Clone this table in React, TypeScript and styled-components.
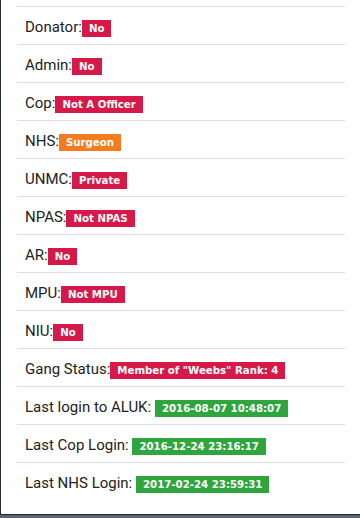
import React from 'react'
import styled, { createGlobalStyle } from 'styled-components'

type Tone = 'danger' | 'warning' | 'success'

type Row = {
  label: string
  value: string
  tone: Tone
  spaced?: boolean
}

const rows: Row[] = [
  { label: 'Donator:', value: 'No', tone: 'danger' },
  { label: 'Admin:', value: 'No', tone: 'danger' },
  { label: 'Cop:', value: 'Not A Officer', tone: 'danger' },
  { label: 'NHS:', value: 'Surgeon', tone: 'warning' },
  { label: 'UNMC:', value: 'Private', tone: 'danger' },
  { label: 'NPAS:', value: 'Not NPAS', tone: 'danger' },
  { label: 'AR:', value: 'No', tone: 'danger' },
  { label: 'MPU:', value: 'Not MPU', tone: 'danger' },
  { label: 'NIU:', value: 'No', tone: 'danger' },
  { label: 'Gang Status:', value: 'Member of "Weebs" Rank: 4', tone: 'danger' },
  { label: 'Last login to ALUK:', value: '2016-08-07 10:48:07', tone: 'success', spaced: true },
  { label: 'Last Cop Login:', value: '2016-12-24 23:16:17', tone: 'success', spaced: true },
  { label: 'Last NHS Login:', value: '2017-02-24 23:59:31', tone: 'success', spaced: true },
]

const toneColors: Record<Tone, string> = {
  danger: '#d7194a',
  warning: '#f47c20',
  success: '#2ea63d',
}

const GlobalStyle = createGlobalStyle`
  html, body {
    margin: 0;
    padding: 0;
    background: #5d6472;
  }
  body {
    font-family: Roboto, "Liberation Sans", sans-serif;
  }
`

const Window = styled.div`
  height: 515px;
  box-sizing: border-box;
  padding-top: 6px;
  background: #ffffff;
  border-left: 1px solid #1f2b3b;
  border-bottom: 1px solid #262626;
`

const List = styled.ul`
  list-style: none;
  margin: 0 0 0 16px;
  padding: 0;
  width: 328px;
`

const Item = styled.li`
  height: 38px;
  box-sizing: border-box;
  border-top: 1px solid #dddddd;
  padding: 10px 8px 0;
  font-size: 15px;
  line-height: 20px;
  color: #222222;
  white-space: nowrap;
`

const Badge = styled.span<{ tone: Tone }>`
  padding: 3px 7px 3px;
  font-family: "DejaVu Sans", Verdana, sans-serif;
  font-size: 10.2px;
  font-weight: bold;
  line-height: 1;
  color: #ffffff;
  background-color: ${({ tone }) => toneColors[tone]};
  vertical-align: baseline;
`

export default function App() {
  return (
    <>
      <GlobalStyle />
      <Window>
        <List>
          {rows.map((row) => (
            <Item key={row.label}>
              {row.label}
              {row.spaced ? ' ' : ''}
              <Badge tone={row.tone}>{row.value}</Badge>
            </Item>
          ))}
        </List>
      </Window>
    </>
  )
}
